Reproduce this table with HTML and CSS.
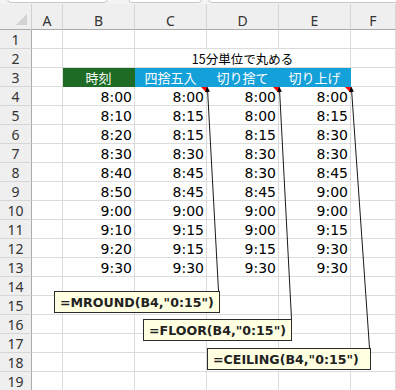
FILE: index.html
```html
<!DOCTYPE html>
<html lang="ja">
<head>
<meta charset="utf-8">
<title>15分単位で丸める</title>
<link rel="stylesheet" href="styles.css">
</head>
<body>
<div class="app">
  <div class="toolbar">
    <div class="box box-name"></div>
    <div class="box box-fx"></div>
    <div class="box box-formula"></div>
  </div>

  <div class="sheet">
    <!-- column headers -->
    <div class="corner"><span class="corner-tri"></span></div>
    <div class="colhead">A</div>
    <div class="colhead">B</div>
    <div class="colhead">C</div>
    <div class="colhead">D</div>
    <div class="colhead">E</div>
    <div class="colhead">F</div>

    <!-- row 1 -->
    <div class="rowhead">1</div>
    <div class="cell"></div><div class="cell"></div><div class="cell"></div><div class="cell"></div><div class="cell"></div><div class="cell"></div>

    <!-- row 2 -->
    <div class="rowhead">2</div>
    <div class="cell"></div><div class="cell"></div>
    <div class="cell title">15分単位で丸める</div>
    <div class="cell"></div>

    <!-- row 3 -->
    <div class="rowhead">3</div>
    <div class="cell"></div>
    <div class="cell hdr hdr-green">時刻</div>
    <div class="cell hdr hdr-blue">四捨五入</div>
    <div class="cell hdr hdr-blue">切り捨て</div>
    <div class="cell hdr hdr-blue">切り上げ</div>
    <div class="cell"></div>

    <div class="rowhead">4</div>
    <div class="cell"></div><div class="cell num">8:00</div><div class="cell num note">8:00</div><div class="cell num note">8:00</div><div class="cell num note">8:00</div><div class="cell"></div>
    <div class="rowhead">5</div>
    <div class="cell"></div><div class="cell num">8:10</div><div class="cell num">8:15</div><div class="cell num">8:00</div><div class="cell num">8:15</div><div class="cell"></div>
    <div class="rowhead">6</div>
    <div class="cell"></div><div class="cell num">8:20</div><div class="cell num">8:15</div><div class="cell num">8:15</div><div class="cell num">8:30</div><div class="cell"></div>
    <div class="rowhead">7</div>
    <div class="cell"></div><div class="cell num">8:30</div><div class="cell num">8:30</div><div class="cell num">8:30</div><div class="cell num">8:30</div><div class="cell"></div>
    <div class="rowhead">8</div>
    <div class="cell"></div><div class="cell num">8:40</div><div class="cell num">8:45</div><div class="cell num">8:30</div><div class="cell num">8:45</div><div class="cell"></div>
    <div class="rowhead">9</div>
    <div class="cell"></div><div class="cell num">8:50</div><div class="cell num">8:45</div><div class="cell num">8:45</div><div class="cell num">9:00</div><div class="cell"></div>
    <div class="rowhead">10</div>
    <div class="cell"></div><div class="cell num">9:00</div><div class="cell num">9:00</div><div class="cell num">9:00</div><div class="cell num">9:00</div><div class="cell"></div>
    <div class="rowhead">11</div>
    <div class="cell"></div><div class="cell num">9:10</div><div class="cell num">9:15</div><div class="cell num">9:00</div><div class="cell num">9:15</div><div class="cell"></div>
    <div class="rowhead">12</div>
    <div class="cell"></div><div class="cell num">9:20</div><div class="cell num">9:15</div><div class="cell num">9:15</div><div class="cell num">9:30</div><div class="cell"></div>
    <div class="rowhead">13</div>
    <div class="cell"></div><div class="cell num">9:30</div><div class="cell num">9:30</div><div class="cell num">9:30</div><div class="cell num">9:30</div><div class="cell"></div>

    <div class="rowhead">14</div>
    <div class="cell"></div><div class="cell"></div><div class="cell"></div><div class="cell"></div><div class="cell"></div><div class="cell"></div>
    <div class="rowhead">15</div>
    <div class="cell"></div><div class="cell"></div><div class="cell"></div><div class="cell"></div><div class="cell"></div><div class="cell"></div>
    <div class="rowhead">16</div>
    <div class="cell"></div><div class="cell"></div><div class="cell"></div><div class="cell"></div><div class="cell"></div><div class="cell"></div>
    <div class="rowhead">17</div>
    <div class="cell"></div><div class="cell"></div><div class="cell"></div><div class="cell"></div><div class="cell"></div><div class="cell"></div>
    <div class="rowhead">18</div>
    <div class="cell"></div><div class="cell"></div><div class="cell"></div><div class="cell"></div><div class="cell"></div><div class="cell"></div>
    <div class="rowhead">19</div>
    <div class="cell"></div><div class="cell"></div><div class="cell"></div><div class="cell"></div><div class="cell"></div><div class="cell"></div>
  </div>

  <!-- comment connectors -->
  <svg class="connectors" width="396" height="390" viewBox="0 0 396 390">
    <g stroke="#1a1a1a" stroke-width="1">
      <line x1="207.5" y1="89" x2="218.5" y2="291"/>
      <line x1="279.5" y1="89" x2="291.5" y2="319"/>
      <line x1="351.5" y1="89" x2="369.5" y2="348"/>
    </g>
    <g fill="#000">
      <polygon points="207.3,86.5 205,92 209.8,91.8"/>
      <polygon points="279.3,86.5 277,92 281.8,91.8"/>
      <polygon points="351.3,86.5 349,92 353.8,91.8"/>
    </g>
  </svg>

  <div class="comment c-mround">=MROUND(B4,"0:15")</div>
  <div class="comment c-floor">=FLOOR(B4,"0:15")</div>
  <div class="comment c-ceiling">=CEILING(B4,"0:15")</div>
</div>
</body>
</html>
```

FILE: styles.css
```css
html, body {
  margin: 0;
  padding: 0;
  background: #ffffff;
}

.app {
  position: relative;
  width: 396px;
  height: 390px;
  overflow: hidden;
  font-family: "Noto Sans", "Noto Sans CJK JP", sans-serif;
}

/* strip under the name box / formula bar */
.toolbar {
  height: 4px;
  overflow: hidden;
  display: flex;
  background: #f3f3f3;
}

.box {
  height: 20px;
  margin-top: -17px;
  background: #ffffff;
  border: 1px solid #c6c6c6;
  border-radius: 4px;
  box-sizing: border-box;
}

.box-name { margin-left: 7px; width: 101px; }
.box-fx { margin-left: 20px; width: 74px; }
.box-formula { margin-left: 6px; flex: 1; margin-right: -10px; }

/* worksheet grid */
.sheet {
  display: grid;
  grid-template-columns: 32px 31px 72px 72px 72px 72px 1fr;
  grid-template-rows: 26px;
  grid-auto-rows: 19px;
}

.sheet > div {
  box-sizing: border-box;
  border-right: 1px solid #dcdcdc;
  border-bottom: 1px solid #dcdcdc;
}

.corner {
  position: relative;
  background: #efefef;
  border-right-color: #d0d0d0 !important;
  border-bottom: 1px solid #ababab !important;
}

.corner-tri {
  position: absolute;
  right: 4px;
  bottom: 4px;
  width: 0;
  height: 0;
  border-left: 11px solid transparent;
  border-bottom: 11px solid #d2d2d2;
}

.colhead {
  background: #efefef;
  border-right-color: #d6d6d6 !important;
  border-bottom: 1px solid #ababab !important;
  display: flex;
  align-items: center;
  justify-content: center;
  padding-top: 8px;
  font-size: 14px;
  color: #333333;
}

.rowhead {
  background: #efefef;
  border-right: 1px solid #ababab !important;
  border-bottom-color: #d6d6d6 !important;
  display: flex;
  align-items: center;
  justify-content: center;
  font-size: 14px;
  color: #333333;
}

.cell {
  display: flex;
  align-items: center;
  white-space: nowrap;
}

.title {
  grid-column: span 3;
  justify-content: center;
  font-family: "Noto Sans CJK JP", sans-serif;
  font-size: 12.5px;
  color: #000000;
}

.hdr {
  justify-content: center;
  font-family: "Noto Sans CJK JP", sans-serif;
  font-size: 13px;
  color: #ffffff;
}

.hdr-green {
  background: #1d6b24;
  border-color: #1d6b24 !important;
}

.hdr-blue {
  background: #14a0d9;
  border-color: #14a0d9 !important;
}

.num {
  justify-content: flex-end;
  padding-right: 2px;
  padding-top: 1px;
  font-family: "DejaVu Sans", sans-serif;
  font-size: 14px;
  color: #000000;
}

/* red comment marker in the cell corner */
.note {
  position: relative;
}

.note::after {
  content: "";
  position: absolute;
  top: 0;
  right: -1px;
  width: 0;
  height: 0;
  border-left: 6px solid transparent;
  border-top: 6px solid #ff0000;
}

.connectors {
  position: absolute;
  left: 0;
  top: 0;
  pointer-events: none;
}

.comment {
  position: absolute;
  box-sizing: border-box;
  height: 22px;
  display: flex;
  align-items: center;
  padding-left: 5px;
  background: #ffffe1;
  border: 1px solid #2b2b2b;
  font-family: "DejaVu Sans", sans-serif;
  font-weight: bold;
  font-size: 12.6px;
  color: #222222;
  white-space: nowrap;
}

.c-mround { left: 54px; top: 291px; width: 166px; }
.c-floor { left: 143px; top: 319px; width: 149px; }
.c-ceiling { left: 207px; top: 348px; width: 164px; }
```
